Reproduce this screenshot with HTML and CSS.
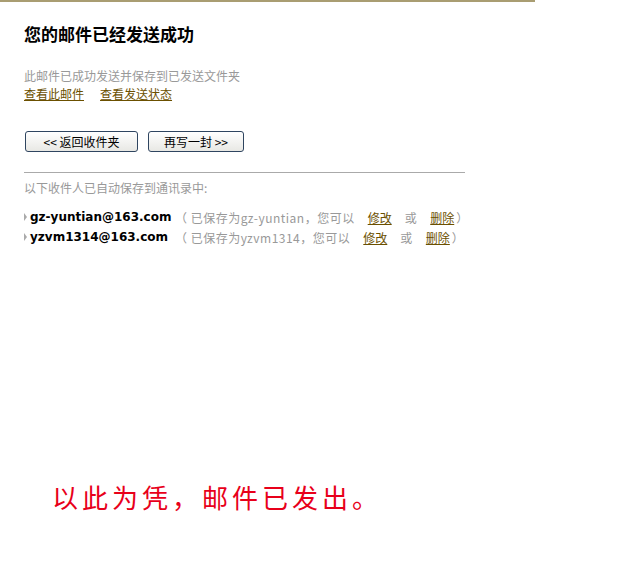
FILE: index.html
```html
<!DOCTYPE html>
<html lang="zh-CN">
<head>
    <meta charset="UTF-8">
    <title>发送成功</title>
    <link rel="stylesheet" href="styles.css">
</head>
<body>
    <div class="topline"></div>
    <div class="main">
        <h1 class="title">您的邮件已经发送成功</h1>

        <p class="tip">此邮件已成功发送并保存到已发送文件夹</p>
        <div class="links">
            <a href="#">查看此邮件</a>
            <a href="#">查看发送状态</a>
        </div>

        <div class="btns">
            <button class="btn btn-back">&lt;&lt; 返回收件夹</button>
            <button class="btn btn-new">再写一封 &gt;&gt;</button>
        </div>

        <div class="sep"></div>

        <p class="tip">以下收件人已自动保存到通讯录中:</p>
        <ul class="contacts">
            <li>
                <b class="addr">gz-yuntian@163.com</b>
                <span class="note">（ 已保存为gz-yuntian，您可以<a href="#">修改</a>或<a href="#">删除</a>）</span>
            </li>
            <li>
                <b class="addr">yzvm1314@163.com</b>
                <span class="note">（ 已保存为yzvm1314，您可以<a href="#">修改</a>或<a href="#">删除</a>）</span>
            </li>
        </ul>
    </div>

    <p class="proof">以此为凭，邮件已发出。</p>
</body>
</html>
```

FILE: styles.css
```css
body {
    margin: 0;
    font-family: "Noto Sans CJK SC", "DejaVu Sans", sans-serif;
    font-size: 12px;
    color: #000;
    background: #fff;
}
.topline {
    width: 535px;
    height: 2px;
    background-color: #a99d72;
}
.main {
    padding: 0 0 0 24px;
    width: 441px;
}
.title {
    margin: 20px 0 0;
    font-size: 17px;
    line-height: 24px;
    font-weight: bold;
}
.tip {
    margin: 0;
    color: #999;
    line-height: 18px;
}
.title + .tip {
    margin-top: 21px;
}
.links {
    line-height: 18px;
    display: flex;
    gap: 16px;
}
a {
    color: #6b5000;
    text-decoration: underline;
}
.btns {
    display: flex;
    gap: 10px;
    margin: 28px 0 0 1px;
}
.btn {
    height: 21px;
    padding: 0;
    font-family: inherit;
    font-size: 12px;
    color: #000;
    border: 1px solid #2f4560;
    border-radius: 3px;
    background: linear-gradient(#ffffff, #e8e8e4);
}
.btn-back {
    width: 113px;
}
.btn-new {
    width: 96px;
}
.sep {
    height: 1px;
    background-color: #aaa;
    margin: 20px 0 0;
}
.sep + .tip {
    margin-top: 6px;
}
.contacts {
    list-style: none;
    margin: 10px 0 0;
    padding: 0;
}
.contacts li {
    display: flex;
    align-items: center;
    height: 20px;
    white-space: nowrap;
}
.contacts li::before {
    content: "";
    flex: none;
    border-left: 3px solid #aaa;
    border-top: 4px solid transparent;
    border-bottom: 4px solid transparent;
    margin-right: 3px;
}
.addr {
    flex: none;
    font-family: "DejaVu Sans", sans-serif;
    font-size: 12px;
    width: 145px;
}
.note {
    flex: none;
    color: #999;
    letter-spacing: 0.5px;
}
.note a {
    margin: 0 13px;
    letter-spacing: 0;
}
.note a:last-child {
    margin-right: 2px;
}
.proof {
    margin: 233px 0 0 52px;
    font-size: 26px;
    letter-spacing: 4px;
    color: #e8001a;
    line-height: 34px;
}
```
